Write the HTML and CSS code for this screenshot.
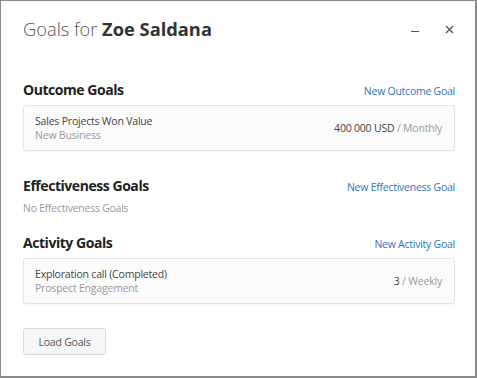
FILE: index.html
```html
<!DOCTYPE html>
<html>
<head>
<meta charset="utf-8">
<link rel="stylesheet" href="styles.css">
</head>
<body>
<div class="dialog">
  <div class="header">
    <h1 class="title"><span class="light">Goals for </span><b>Zoe Saldana</b></h1>
    <div class="controls">
      <span class="minimize"></span>
      <svg class="close" width="9" height="9" viewBox="0 0 9 9"><path d="M1 1 L8 8 M8 1 L1 8" stroke="#555" stroke-width="1.4"/></svg>
    </div>
  </div>
  <div class="body">
    <section class="group">
      <div class="group-head">
        <h2>Outcome Goals</h2>
        <a class="link">New Outcome Goal</a>
      </div>
      <div class="card">
        <div class="card-text">
          <div class="name">Sales Projects Won Value</div>
          <div class="sub">New Business</div>
        </div>
        <div class="value">400 000 USD <span class="period">/ Monthly</span></div>
      </div>
    </section>
    <section class="group group-empty">
      <div class="group-head">
        <h2>Effectiveness Goals</h2>
        <a class="link">New Effectiveness Goal</a>
      </div>
      <div class="empty">No Effectiveness Goals</div>
    </section>
    <section class="group group-last">
      <div class="group-head">
        <h2>Activity Goals</h2>
        <a class="link">New Activity Goal</a>
      </div>
      <div class="card">
        <div class="card-text">
          <div class="name">Exploration call (Completed)</div>
          <div class="sub">Prospect Engagement</div>
        </div>
        <div class="value">3 <span class="period">/ Weekly</span></div>
      </div>
    </section>
    <button class="btn">Load Goals</button>
  </div>
</div>
</body>
</html>
```

FILE: styles.css
```css
html, body {
  margin: 0;
  padding: 0;
  height: 100%;
}
body {
  background: #8a8a8a;
  font-family: "Open Sans", "Liberation Sans", sans-serif;
  color: #333;
  box-sizing: border-box;
  padding: 1px 2px 2px 1px;
}
.dialog {
  background: #fff;
  height: 100%;
  box-sizing: border-box;
  padding: 0 20px 0 22px;
}
.header {
  display: flex;
  align-items: center;
  justify-content: space-between;
  padding-top: 15px;
  height: 26px;
}
.title {
  margin: 0;
  font-size: 18.3px;
  line-height: 26px;
  font-weight: 400;
  color: #333;
}
.title .light {
  font-weight: 300;
  color: #555;
}
.controls {
  display: flex;
  align-items: center;
  gap: 26px;
  padding-right: 1px;
}
.minimize {
  display: block;
  width: 8px;
  height: 1.5px;
  background: #555;
  margin-top: 5px;
}
.body {
  padding-top: 39px;
}
.group {
  margin-bottom: 26px;
}
.group-empty {
  margin-bottom: 19px;
}
.group-last {
  margin-bottom: 24px;
}
.group-head {
  display: flex;
  justify-content: space-between;
  align-items: baseline;
  margin-bottom: 5px;
  line-height: 18px;
}
h2 {
  margin: 0;
  font-size: 14px;
  letter-spacing: -0.45px;
  font-weight: 700;
  color: #222;
}
.link {
  font-size: 10.5px;
  letter-spacing: -0.25px;
  color: #2e72c0;
}
.card {
  display: flex;
  justify-content: space-between;
  align-items: center;
  background: #fbfbfb;
  border: 1px solid #e4e4e4;
  border-radius: 3px;
  padding: 8px 12px 8px 11px;
  box-shadow: 0 1px 2px rgba(0,0,0,0.04);
}
.name, .sub, .value {
  font-size: 10.5px;
  letter-spacing: -0.2px;
  line-height: 14px;
}
.name {
  color: #444;
}
.sub {
  color: #999;
}
.value {
  color: #444;
}
.period {
  color: #999;
}
.empty {
  margin-top: 0;
  font-size: 10.5px;
  letter-spacing: -0.25px;
  line-height: 14px;
  color: #999;
}
.btn {
  display: block;
  font-family: inherit;
  font-size: 10.5px;
  letter-spacing: -0.2px;
  color: #555;
  background: #f5f6f7;
  border: 1px solid #d9dadb;
  border-radius: 3px;
  width: 83px;
  height: 27px;
  padding: 0;
}
```
